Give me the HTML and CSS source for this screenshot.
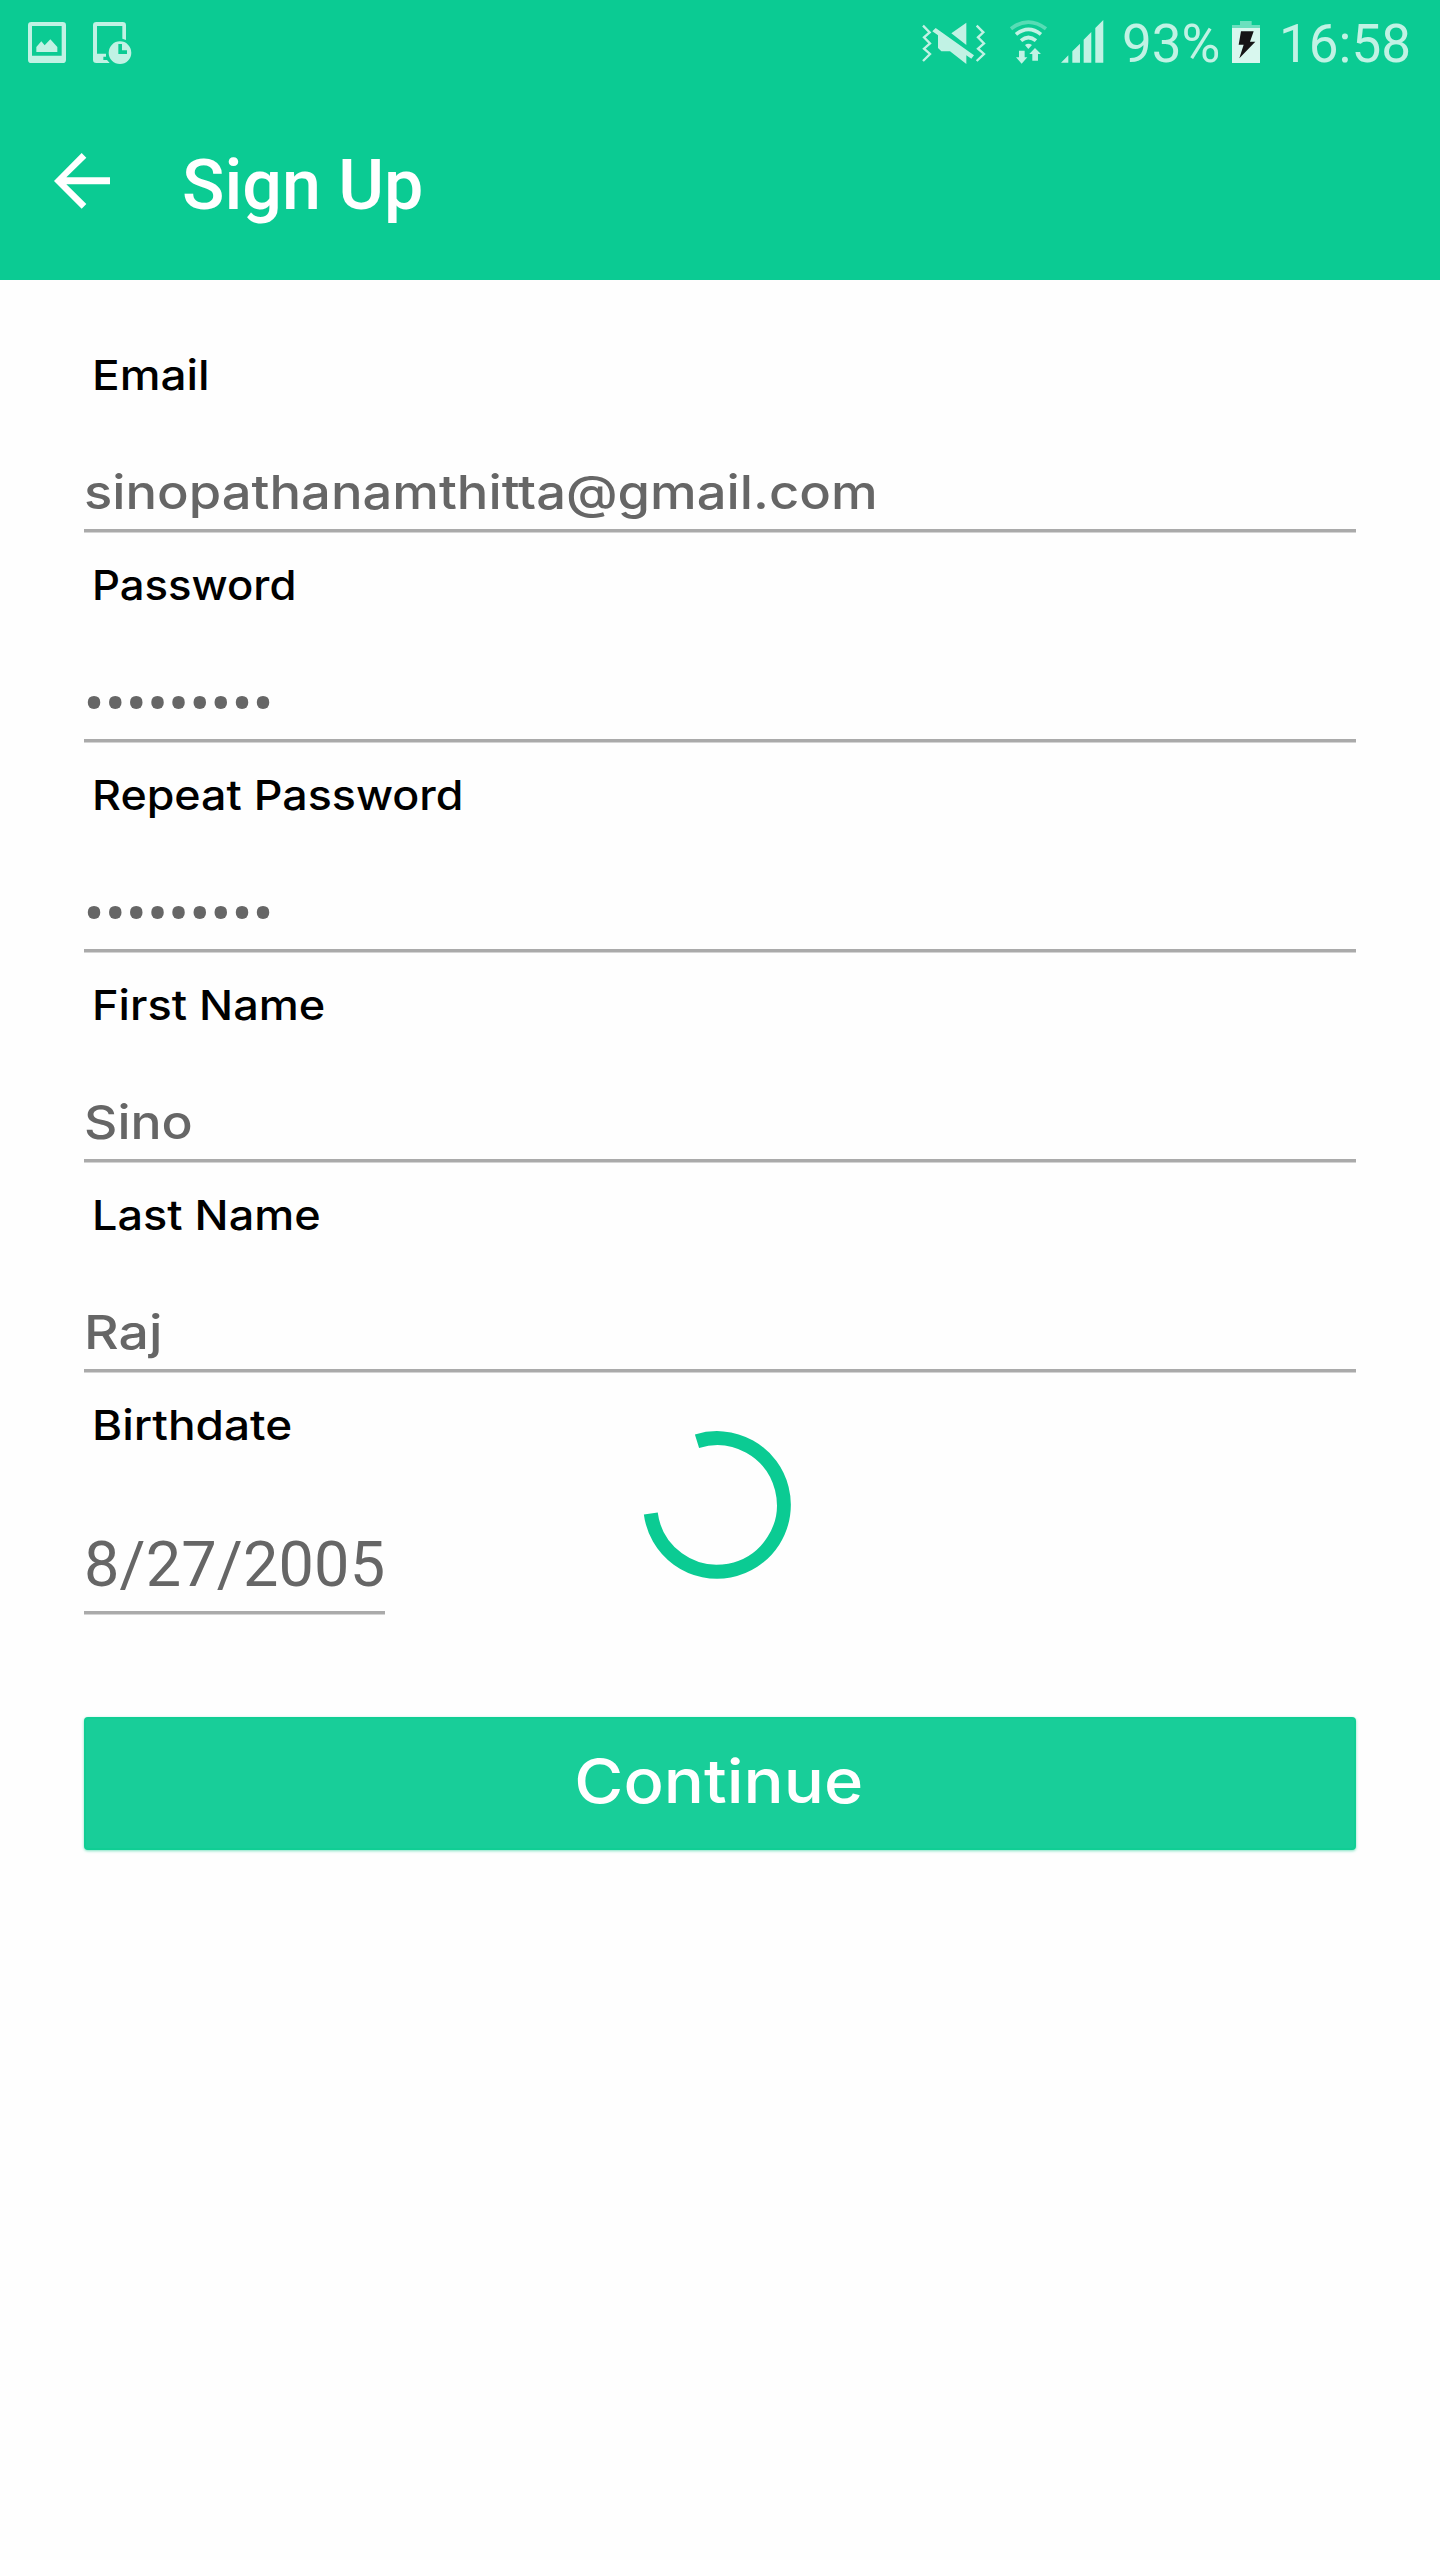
FILE: index.html
```html
<!DOCTYPE html>
<html lang="en">
<head>
<meta charset="utf-8">
<title>Sign Up</title>
<link rel="stylesheet" href="styles.css">
</head>
<body>
<header class="header">
  <div class="status">
    <svg class="icon-picture" viewBox="83 66 114 123"><path fill-rule="evenodd" d="M93 66H187Q197 66 197 76V179Q197 189 187 189H93Q83 189 83 179V76Q83 66 93 66ZM95 78V167H184V78ZM108 141L123 124L133 136L150 118L171 141V156H108Z"/></svg>
    <svg class="icon-device" viewBox="279 66 117 127"><path d="M289 66H368Q378 66 378 76V120L367 116V78H291V161H318V170H310V180H321L329 189H289Q279 189 279 179V76Q279 66 289 66Z"/><path fill-rule="evenodd" d="M360 124A34 34 0 1 1 360 192A34 34 0 1 1 360 124ZM355 132V162H381V151H366V132Z"/></svg>
    <span class="spacer"></span>
    <svg class="icon-mute" viewBox="36 34 192 126"><path d="M124 68L169 36V103ZM67 62L77 52L192 134L184 144L169 134V160L120 122H94L84 112V74Z"/><path class="zigzag" d="M39 45L59 65L42 80L60 98L42 114L60 130L39 151M200 45L220 65L204 80L222 98L204 114L222 130L200 151"/></svg>
    <svg class="icon-wifi" viewBox="300 28 112 132"><path class="arc faint" d="M303 54Q355 14 408 54"/><path class="arc" d="M318 71Q355 41 393 71"/><path class="arc" d="M333 90Q355 71 378 90"/><path d="M345 103Q355 95 366 103L355 115ZM327 120H344V140H352L335 159L318 140H327ZM375 112L393 130H384V150H367V130H358Z"/></svg>
    <svg class="icon-signal" viewBox="455 30 127 128"><path d="M455 158L477 136V158ZM489 124L512 101V158H489ZM523 89L546 66V158H523ZM558 54L582 30V158H558Z"/></svg>
    <span class="battery-level">93%</span>
    <svg class="icon-battery" viewBox="366 33 84 126"><path class="charge-empty" d="M390 33H425V45H450V54H366V45H390Z"/><path class="charge-full" d="M366 54H450V159H366Z"/><path class="bolt" d="M393 64H431L420 95H436L388 145L401 104H386Z"/></svg>
    <span class="clock">16:58</span>
  </div>
  <div class="toolbar">
    <svg class="back" viewBox="162 458 168 167"><path d="M162 542L245 458L259 472L199 531H330V552H199L259 611L245 625Z"/></svg>
    <h1 class="title">Sign Up</h1>
  </div>
</header>
<main class="form">
  <div class="field"><div class="label"><span class="wide email-label">Email</span></div><div class="value"><span class="wide email">sinopathanamthitta@gmail.com</span></div></div>
  <div class="field"><div class="label"><span class="wide password-label">Password</span></div><div class="value secret">•••••••••</div></div>
  <div class="field"><div class="label"><span class="wide repeat-label">Repeat Password</span></div><div class="value secret">•••••••••</div></div>
  <div class="field"><div class="label"><span class="wide first-label">First Name</span></div><div class="value"><span class="wide first">Sino</span></div></div>
  <div class="field"><div class="label"><span class="wide last-label">Last Name</span></div><div class="value"><span class="wide last">Raj</span></div></div>
  <div class="field"><div class="label"><span class="wide birth-label">Birthdate</span></div><div class="value date">8/27/2005</div></div>
  <button class="continue" type="button"><span class="wide continue-text">Continue</span></button>
</main>
<svg class="spinner" viewBox="-74 -74 148 148"><path d="M-20 -63.8A66.8 66.8 0 1 1 -66.2 8.5"/></svg>
</body>
</html>
```
FILE: styles.css
```css
* { box-sizing: border-box; }
body { margin: 0; width: 1440px; height: 2560px; background: #fefefe; font-family: Inter, sans-serif; position: relative; overflow: hidden; }
svg { display: block; flex: none; overflow: visible; }

.header { height: 280px; background: #0bcb93; color: #fff; font-family: Roboto, sans-serif; }
.status { height: 85px; padding: 0 31px 0 27.7px; display: flex; align-items: center; color: #c1f2e4; fill: #c1f2e4; font-size: 53px; line-height: 85px; }
.spacer { flex: 1; }
.icon-picture { width: 38px; height: 41px; margin-right: 27.3px; }
.icon-device { width: 39px; height: 42.3px; margin-top: 1px; }
.icon-mute { width: 64px; height: 42px; margin-right: 24px; }
.icon-wifi { width: 37.3px; height: 44px; margin-right: 14.4px; margin-top: -2px; }
.icon-signal { width: 42.3px; height: 42.7px; margin-right: 18.3px; margin-top: -2px; }
.zigzag { fill: none; stroke: #c1f2e4; stroke-width: 7; }
.arc { fill: none; stroke: #c1f2e4; stroke-width: 11; }
.faint { stroke: #57dcb5; }
.battery-level { width: 110px; padding-top: 3px; white-space: nowrap; }
.icon-battery { width: 28px; height: 42px; margin-right: 19px; margin-top: -1px; }
.charge-empty { fill: #6be0be; }
.charge-full { fill: #d8f7ee; }
.bolt { fill: #151515; }
.clock { width: 130px; padding-top: 3px; white-space: nowrap; }

.toolbar { height: 195px; padding-left: 54px; display: flex; align-items: center; }
.back { width: 56px; height: 55.7px; fill: #fff; margin-right: 72px; margin-top: -4px; }
.title { margin: 4px 0 0; font-size: 70px; font-weight: 500; line-height: 80px; }

.form { padding: 43px 84px 0; display: flex; flex-direction: column; }
.field { height: 210px; padding-top: 22px; flex: none; }
.label { height: 60px; padding-left: 7.5px; font-size: 41px; line-height: 60px; font-weight: 500; color: #000; white-space: nowrap; }
.value { margin-top: 57px; height: 70px; border-bottom: 3px solid #aaa; box-shadow: 0 1px #d4d4d4; font-size: 47px; line-height: 60px; font-weight: 500; color: #666; white-space: nowrap; }

/* Extended letterforms: Inter widened per string */
.wide { display: inline-block; transform-origin: left center; }
.email-label { transform: scaleX(1.12); }
.password-label { transform: scaleX(1.064); }
.repeat-label { transform: scaleX(1.092); }
.first-label { transform: scaleX(1.1); }
.last-label { transform: scaleX(1.098); }
.birth-label { transform: scaleX(1.12); }
.email { transform: scaleX(1.117); }
.first { transform: scaleX(1.1); }
.last { transform: scaleX(1.14); }

.secret { padding-top: 3px; font-family: Roboto, sans-serif; font-size: 57px; letter-spacing: 1.2px; }
.date { width: 301px; margin-top: 70px; height: 89px; font-family: Roboto, sans-serif; font-weight: 400; font-size: 63px; line-height: 80px; letter-spacing: .15px; }
.continue { height: 133px; margin-top: 134px; padding: 0 2px 5px 0; border: 2px solid #10ce94; border-radius: 4px; background: #18ce99; box-shadow: 0 1px 3px #7be2c1; color: #fff; font: 500 61px Inter, sans-serif; }
.continue-text { transform-origin: center; transform: scaleX(1.096); }

.spinner { position: absolute; left: 643px; top: 1431px; width: 148px; height: 148px; fill: none; stroke: #0bcb93; stroke-width: 14; }
```
